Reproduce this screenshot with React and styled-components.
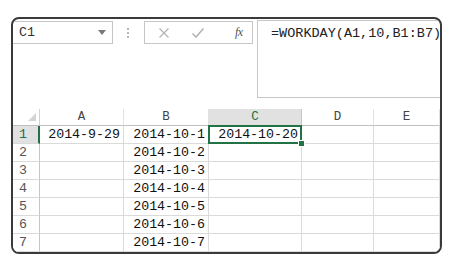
import React from 'react';
import styled, { createGlobalStyle } from 'styled-components';

const GREEN = '#217346';
const MONO = '"Liberation Mono", "DejaVu Sans Mono", monospace';

const Global = createGlobalStyle`
    html, body {
        margin: 0;
        padding: 0;
        background: #fff;
    }
    body {
        font-family: ${MONO};
    }
`;

const Frame = styled.div`
    margin: 17px 0 0 11px;
    width: 431px;
    height: 237px;
    box-sizing: border-box;
    border: 2px solid #3a3a3a;
    border-radius: 8px;
    overflow: hidden;
    display: flex;
    flex-direction: column;
    background: #fff;
`;

const TopArea = styled.div`
    height: 90px;
    display: flex;
    align-items: flex-start;
    flex-shrink: 0;
`;

const NameBox = styled.div`
    margin-top: 2px;
    width: 100px;
    height: 23px;
    box-sizing: border-box;
    border: 1px solid #c6c6c6;
    border-left: none;
    display: flex;
    align-items: center;
    justify-content: space-between;
    padding: 0 6px 0 6px;
    font-size: 13.3px;
    color: #333;
`;

const Caret = styled.span`
    width: 0;
    height: 0;
    border-left: 4px solid transparent;
    border-right: 4px solid transparent;
    border-top: 5px solid #7a7a7a;
`;

const Dots = styled.div`
    margin: 9px 0 0 14px;
    width: 3px;
    display: flex;
    flex-direction: column;
    gap: 2px;
    span {
        width: 2px;
        height: 2px;
        background: #b8b8b8;
    }
`;

const FxBox = styled.div`
    margin: 2px 0 0 14px;
    width: 109px;
    height: 23px;
    box-sizing: border-box;
    border: 1px solid #c6c6c6;
    display: flex;
    align-items: center;
    padding-left: 13px;
    gap: 21px;
`;

const FxLabel = styled.span`
    font-family: "Liberation Serif", serif;
    font-style: italic;
    font-size: 12px;
    color: #555;
    margin-left: 9px;
    letter-spacing: -0.5px;
`;

const FormulaBar = styled.div`
    margin: 1px 0 0 4px;
    flex: 1;
    height: 78px;
    box-sizing: border-box;
    border: 1px solid #c6c6c6;
    border-right: none;
    padding: 5px 0 0 13px;
    font-size: 13.5px;
    color: #222;
    white-space: nowrap;
    overflow: hidden;
`;

const Sheet = styled.div`
    display: grid;
    grid-template-columns: 27px 84px 85px 93px 72px 66px;
    grid-template-rows: 17px;
    grid-auto-rows: 18px;
    font-size: 13.3px;
`;

const Corner = styled.div`
    border-right: 1px solid #d0d0d0;
    border-bottom: 1px solid #c0c0c0;
    display: flex;
    align-items: flex-end;
    justify-content: flex-end;
    padding: 0 3px 4px 0;
    &::after {
        content: '';
        width: 0;
        height: 0;
        border-left: 8px solid transparent;
        border-bottom: 8px solid #d4d4d4;
    }
`;

const ColHead = styled.div`
    box-sizing: border-box;
    border-right: 1px solid ${p => (p.$active ? '#c6c6c6' : '#e2e2e2')};
    border-bottom: 1px solid #c0c0c0;
    background: ${p => (p.$active ? '#e1e1e1' : '#fff')};
    color: ${p => (p.$active ? GREEN : '#444')};
    display: flex;
    align-items: center;
    justify-content: center;
    font-size: 12.5px;
`;

const RowHead = styled.div`
    box-sizing: border-box;
    border-right: ${p => (p.$active ? `2px solid ${GREEN}` : '1px solid #c6c6c6')};
    border-bottom: 1px solid #dadada;
    background: ${p => (p.$active ? '#e1e1e1' : '#fff')};
    color: ${p => (p.$active ? GREEN : '#555')};
    display: flex;
    align-items: center;
    padding-left: 6px;
`;

const Cell = styled.div`
    position: relative;
    box-sizing: border-box;
    border-right: 1px solid #dadada;
    border-bottom: 1px solid #dadada;
    display: flex;
    align-items: center;
    justify-content: flex-end;
    padding-right: 3px;
    color: #111;
    white-space: nowrap;
    ${p => p.$selected && `
        &::before {
            content: '';
            position: absolute;
            left: -1px;
            top: -1px;
            right: -1px;
            bottom: -1px;
            border: 2px solid ${GREEN};
            z-index: 1;
        }
        &::after {
            content: '';
            position: absolute;
            right: -4px;
            bottom: -4px;
            width: 5px;
            height: 5px;
            background: ${GREEN};
            border: 1px solid #fff;
            z-index: 2;
        }
    `}
`;

const columns = ['A', 'B', 'C', 'D', 'E'];

const rows = [
    ['2014-9-29', '2014-10-1', '2014-10-20', '', ''],
    ['', '2014-10-2', '', '', ''],
    ['', '2014-10-3', '', '', ''],
    ['', '2014-10-4', '', '', ''],
    ['', '2014-10-5', '', '', ''],
    ['', '2014-10-6', '', '', ''],
    ['', '2014-10-7', '', '', ''],
];

const CrossIcon = () => (
    <svg width="12" height="12" viewBox="0 0 12 12">
        <path d="M1.5 1.5 L10.5 10.5 M10.5 1.5 L1.5 10.5" stroke="#b5b5b5" strokeWidth="1.3" fill="none" />
    </svg>
);

const CheckIcon = () => (
    <svg width="14" height="12" viewBox="0 0 14 12">
        <path d="M1.5 6.5 L5 10 L12.5 1.5" stroke="#b5b5b5" strokeWidth="1.6" fill="none" />
    </svg>
);

const App = () => (
    <>
        <Global />
        <Frame>
            <TopArea>
                <NameBox>
                    <span>C1</span>
                    <Caret />
                </NameBox>
                <Dots>
                    <span />
                    <span />
                    <span />
                </Dots>
                <FxBox>
                    <CrossIcon />
                    <CheckIcon />
                    <FxLabel>fx</FxLabel>
                </FxBox>
                <FormulaBar>=WORKDAY(A1,10,B1:B7)</FormulaBar>
            </TopArea>
            <Sheet>
                <Corner />
                {columns.map(c => (
                    <ColHead key={c} $active={c === 'C'}>{c}</ColHead>
                ))}
                {rows.map((row, i) => (
                    <React.Fragment key={i}>
                        <RowHead $active={i === 0}>{i + 1}</RowHead>
                        {row.map((value, j) => (
                            <Cell key={j} $selected={i === 0 && j === 2}>{value}</Cell>
                        ))}
                    </React.Fragment>
                ))}
            </Sheet>
        </Frame>
    </>
);

export default App;
